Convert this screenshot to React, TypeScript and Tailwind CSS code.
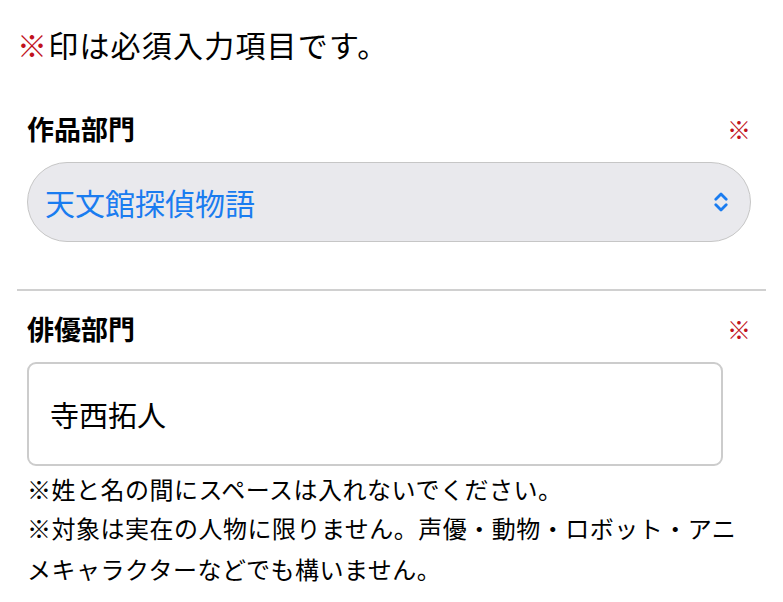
import React from "react";

const SelectChevron = () => (
  <svg width="14" height="22" viewBox="0 0 14 22" fill="none" className="shrink-0">
    <path d="M1.8 8.2 L7 3 L12.2 8.2" stroke="#1a7cf0" strokeWidth="2.8" strokeLinecap="round" strokeLinejoin="round" />
    <path d="M1.8 13.8 L7 19 L12.2 13.8" stroke="#1a7cf0" strokeWidth="2.8" strokeLinecap="round" strokeLinejoin="round" />
  </svg>
);

const FieldLabel = ({ label }: { label: string }) => (
  <div className="flex items-center justify-between">
    <span className="text-[27px] leading-[36px] font-bold text-black">{label}</span>
    <span className="text-[24px] leading-[36px] text-[#c1121c]">※</span>
  </div>
);

const App = () => {
  return (
    <div
      className="w-[783px] h-[602px] overflow-hidden bg-white px-[17px] text-black"
      style={{ fontFamily: '"Noto Sans CJK JP", "Noto Sans", sans-serif' }}
    >
      <p className="pt-[23px] text-[30px] leading-[42px] tracking-[1.2px]">
        <span className="text-[#c1121c]">※</span>印は必須入力項目です。
      </p>

      <section className="pl-[10px] pr-[15px] pt-[46px] pb-[47px] border-b-2 border-[#d0d0d0]">
        <FieldLabel label="作品部門" />
        <div className="mt-[15px] h-[80px] flex items-center justify-between rounded-full border-[1.5px] border-[#c6c6c6] bg-[#e9e9ed] pl-[17px] pr-[22px]">
          <span className="text-[30px] leading-[40px] text-[#1a7cf0]">天文館探偵物語</span>
          <SelectChevron />
        </div>
      </section>

      <section className="pl-[10px] pr-[15px] pt-[20px]">
        <FieldLabel label="俳優部門" />
        <div className="mt-[15px] w-[696px] h-[104px] flex items-center rounded-[9px] border-2 border-[#cccccc] pl-[21px]">
          <span className="text-[29px] leading-[40px]">寺西拓人</span>
        </div>
        <p className="mt-[5px] text-[24px] leading-[36px] tracking-[0.5px]">
          ※姓と名の間にスペースは入れないでください。
        </p>
        <p className="text-[24px] leading-[41px] tracking-[0.5px]">
          ※対象は実在の人物に限りません。声優・動物・ロボット・アニメキャラクターなどでも構いません。
        </p>
      </section>
    </div>
  );
};

export default App;
